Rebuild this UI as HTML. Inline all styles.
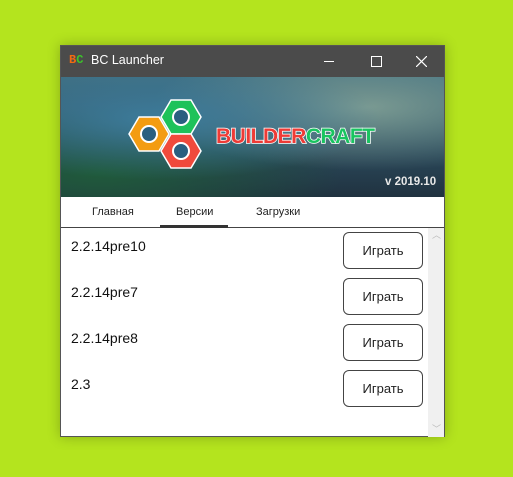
<!DOCTYPE html>
<html><head><style>
body{margin:0;width:513px;height:477px;background:#b4e41e;position:relative;overflow:hidden;font-family:"Segoe UI","Liberation Sans","DejaVu Sans",sans-serif}
.win{position:absolute;left:60px;top:45px;width:385px;height:392px;background:#fff;box-shadow:0 0 12px rgba(0,0,0,.25);border:1px solid #555;box-sizing:border-box}
.tb{position:absolute;left:0;top:0;width:100%;height:31px;background:#4b4b4b;color:#fff;font-size:12.5px}
.ban{position:absolute;left:0;top:31px;width:100%;height:120px;background:radial-gradient(ellipse at 25% 35%,#3d7c9c,transparent 55%),radial-gradient(ellipse at 80% 25%,#7a9a92,transparent 50%),radial-gradient(ellipse at 10% 80%,#1f5a3a,transparent 50%),linear-gradient(180deg,#3f6e80,#2b4a5c 60%,#203240);overflow:hidden}
.tabs{position:absolute;left:0;top:151px;width:100%;height:30px;border-bottom:1px solid #444;font-size:11px;color:#222}
.tabs span{position:absolute;top:9px}
.row{position:absolute;left:10px;font-size:14px;color:#111}
.btn{position:absolute;left:282px;width:80px;height:37px;border:1px solid #444;border-radius:6px;box-sizing:border-box;text-align:center;line-height:35px;font-size:13px;color:#222}
.sb{position:absolute;left:367px;top:182px;width:16px;height:209px;background:#f0f0f0}
</style></head><body>
<div class="win">
 <div class="tb">
  <span style="position:absolute;left:8px;top:7px;font-weight:bold;font-size:12px;font-family:'Liberation Mono',monospace"><span style="color:#f26a10">B</span><span style="color:#3cc42a">C</span></span>
  <span style="position:absolute;left:30px;top:7px">BC Launcher</span>
  <div style="position:absolute;left:263px;top:15px;width:10px;height:1px;background:#fff"></div>
  <div style="position:absolute;left:310px;top:10px;width:9px;height:9px;border:1px solid #fff"></div>
  <svg style="position:absolute;left:355px;top:10px" width="11" height="11"><path d="M0 0L11 11M11 0L0 11" stroke="#fff" stroke-width="1.2"/></svg>
 </div>
 <div class="ban">
  <svg width="385" height="120" style="position:absolute;left:0;top:0">
   <g stroke="#fff" stroke-width="1.5">
    <polygon points="68,57 78,40 98,40 108,57 98,74 78,74" fill="#f39c12"/>
    <polygon points="100,40 110,23 130,23 140,40 130,57 110,57" fill="#1ec25a"/>
    <polygon points="100,74 110,57 130,57 140,74 130,91 110,91" fill="#f04a3c"/>
    <circle cx="88" cy="57" r="8" fill="#2a5f80" stroke-width="2"/>
    <circle cx="120" cy="40" r="8" fill="#2a5f80" stroke-width="2"/>
    <circle cx="120" cy="74" r="8" fill="#2a5f80" stroke-width="2"/>
   </g>
   <text x="155" y="66" font-family="Liberation Sans,sans-serif" font-weight="bold" font-size="21" stroke="#fff" stroke-width="1.5" paint-order="stroke" letter-spacing="-0.5"><tspan fill="#ee3b36">BUILDER</tspan><tspan fill="#19c460">CRAFT</tspan></text>
   <text x="324" y="108" fill="#e8e8e8" font-family="Liberation Sans,sans-serif" font-weight="bold" font-size="11.5">v 2019.10</text>
  </svg>
 </div>
 <div class="tabs">
  <span style="left:31px">Главная</span>
  <span style="left:115px">Версии</span>
  <span style="left:195px">Загрузки</span>
  <div style="position:absolute;left:99px;top:28px;width:68px;height:3px;background:#333"></div>
 </div>
 <div class="row" style="top:192px">2.2.14pre10</div>
 <div class="row" style="top:238px">2.2.14pre7</div>
 <div class="row" style="top:284px">2.2.14pre8</div>
 <div class="row" style="top:330px">2.3</div>
 <div class="btn" style="top:186px">Играть</div>
 <div class="btn" style="top:232px">Играть</div>
 <div class="btn" style="top:278px">Играть</div>
 <div class="btn" style="top:324px">Играть</div>
 <div class="sb"><span style="position:absolute;left:4px;top:0;color:#bbb;font-size:9px">︿</span><span style="position:absolute;left:4px;bottom:2px;color:#bbb;font-size:9px">﹀</span></div>
</div>
</body></html>
